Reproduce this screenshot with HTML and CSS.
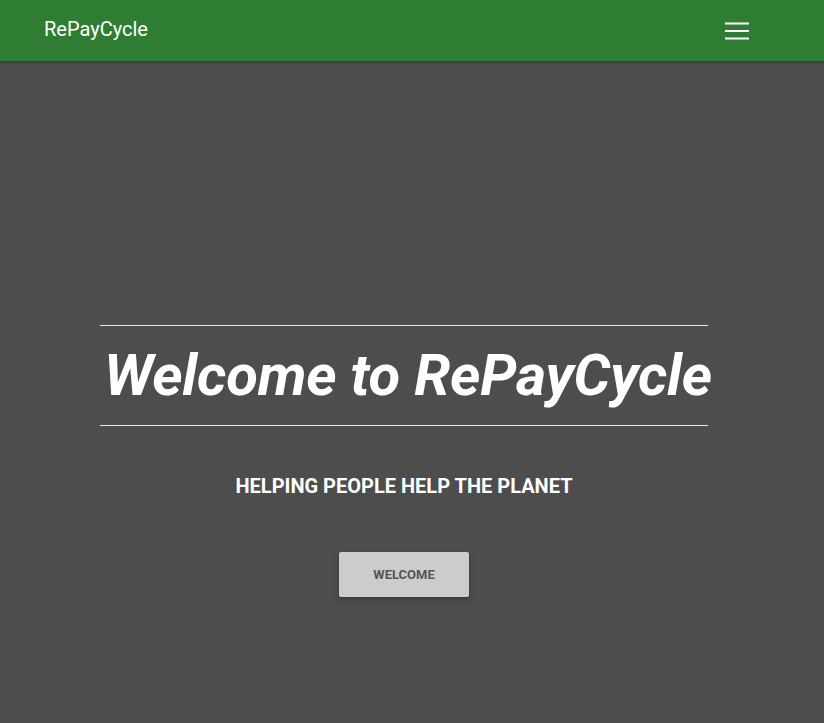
FILE: index.html
```html
<!DOCTYPE html>
<html lang="en">
<head>
<meta charset="utf-8">
<title>RePayCycle</title>
<link rel="stylesheet" href="styles.css">
</head>
<body>
<header class="navbar">
  <span class="brand">RePayCycle</span>
  <button class="menu-toggle" aria-label="Menu">
    <svg width="24" height="18" viewBox="0 0 24 18"><path d="M0 1.5H24M0 9H24M0 16.5H24" stroke="#fff" stroke-width="2" fill="none"/></svg>
  </button>
</header>
<main class="hero">
  <h1 class="hero-title">Welcome to RePayCycle</h1>
  <h2 class="hero-sub">HELPING PEOPLE HELP THE PLANET</h2>
  <button class="btn-welcome">WELCOME</button>
</main>
</body>
</html>
```
FILE: styles.css
```css
html, body {
  margin: 0;
  padding: 0;
  height: 100%;
}
body {
  background: #4d4d4d;
  font-family: Roboto, "Liberation Sans", sans-serif;
  color: #fff;
  overflow: hidden;
}
.navbar {
  height: 61px;
  background: #2e7d32;
  display: flex;
  align-items: center;
  justify-content: space-between;
  padding: 0 75px 0 44px;
  box-sizing: border-box;
  box-shadow: 0 2px 3px rgba(0,0,0,0.25);
  position: relative;
  z-index: 1;
}
.brand {
  font-size: 20px;
  color: #fff;
  line-height: 1;
  margin-top: -3px;
}
.menu-toggle {
  background: none;
  border: 0;
  padding: 0;
  margin-top: 1px;
  display: flex;
}
.hero {
  width: 608px;
  margin: 0 0 0 100px;
  padding-top: 264px;
  display: flex;
  flex-direction: column;
  align-items: center;
}
.hero-title {
  align-self: stretch;
  margin: 0;
  font-size: 58px;
  font-weight: 700;
  font-style: italic;
  line-height: 72px;
  padding: 13px 0 14px;
  text-align: center;
  border-top: 1px solid #e6e6e6;
  border-bottom: 1px solid #e6e6e6;
  white-space: nowrap;
  letter-spacing: -0.2px;
  text-indent: 4px;
}
.hero-sub {
  margin: 48px 0 0;
  font-size: 20px;
  line-height: 24px;
  font-weight: 700;
}
.btn-welcome {
  margin-top: 54px;
  width: 130px;
  height: 45px;
  background: #cccccc;
  color: #555;
  border: 0;
  border-radius: 2px;
  font-family: Roboto, "Liberation Sans", sans-serif;
  font-weight: 700;
  font-size: 13px;
  box-shadow: 0 2px 5px rgba(0,0,0,0.3);
}
```
